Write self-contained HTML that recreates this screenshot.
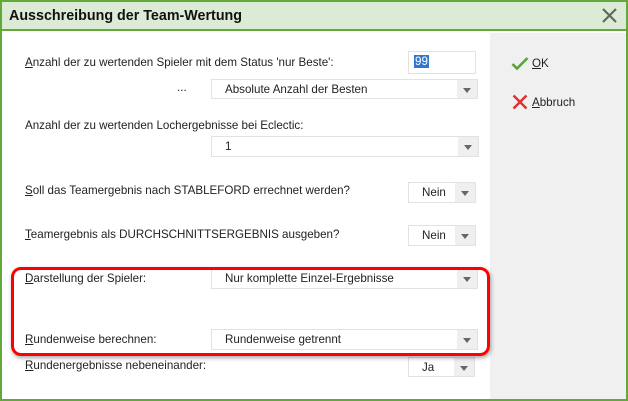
<!DOCTYPE html>
<html><head><meta charset="utf-8"><style>
*{margin:0;padding:0;box-sizing:border-box}
body{width:628px;height:401px;overflow:hidden;background:#fff;font-family:"Liberation Sans","DejaVu Sans",sans-serif;font-size:11.6px;color:#222;position:relative}
.frame{position:absolute;left:0;top:0;width:628px;height:401px;border:2px solid #63a83a}
.title{position:absolute;left:2px;top:2px;width:624px;height:29px;background:#dcebd6;border-bottom:2px solid #63a83a;font-weight:bold;font-size:14.3px;color:#111;padding:6px 0 0 7px}
.side{position:absolute;left:490px;top:33px;width:136px;height:366px;background:#f0f0f0}
.t{position:absolute;white-space:nowrap}
u{text-decoration:underline}
.cb{position:absolute;border:1px solid #e2e2e2;background:#fff}
.cb span{position:absolute;left:13px;top:3px}
.cb i{position:absolute;right:0;top:0;bottom:0;width:20px;background:#efefef}
.cb i:after{content:"";position:absolute;left:6px;top:8px;border-left:4px solid transparent;border-right:4px solid transparent;border-top:5px solid #666}
</style></head><body>
<div class="frame"></div>
<div class="title">Ausschreibung der Team-Wertung</div>
<svg style="position:absolute;left:601px;top:7px" width="17" height="17"><path d="M2 2L15 15M15 2L2 15" stroke="#666" stroke-width="2.2"/></svg>
<div class="side"></div>
<svg style="position:absolute;left:511px;top:56px" width="18" height="15"><path d="M1.5 8L6 12.5L16.5 2" stroke="#5ca33a" stroke-width="2.6" fill="none"/></svg>
<div class="t" style="left:532px;top:57px"><u>O</u>K</div>
<svg style="position:absolute;left:512px;top:94px" width="16" height="16"><path d="M1.5 1.5L14.5 14.5M14.5 1.5L1.5 14.5" stroke="#e03030" stroke-width="2.4"/></svg>
<div class="t" style="left:532px;top:96px"><u>A</u>bbruch</div>

<div class="t" style="left:25px;top:56px"><u>A</u>nzahl der zu wertenden Spieler mit dem Status 'nur Beste':</div>
<div style="position:absolute;left:408px;top:51px;width:68px;height:23px;border:1px solid #e2e2e2;background:#fff"><span style="position:absolute;left:5px;top:3px;background:#3377cc;color:#fff;padding:0 1px">99</span></div>
<div class="t" style="left:177px;top:81px">...</div>
<div class="cb" style="left:211px;top:79px;width:267px;height:20px"><span>Absolute Anzahl der Besten</span><i></i></div>

<div class="t" style="left:25px;top:119px">Anzahl der zu wertenden Lochergebnisse bei Eclectic:</div>
<div class="cb" style="left:211px;top:136px;width:268px;height:21px"><span>1</span><i></i></div>

<div class="t" style="left:25px;top:184px"><u>S</u>oll das Teamergebnis nach STABLEFORD errechnet werden?</div>
<div class="cb" style="left:408px;top:182px;width:68px;height:21px"><span>Nein</span><i></i></div>

<div class="t" style="left:25px;top:228px"><u>T</u>eamergebnis als DURCHSCHNITTSERGEBNIS ausgeben?</div>
<div class="cb" style="left:408px;top:225px;width:68px;height:21px"><span>Nein</span><i></i></div>

<div class="t" style="left:25px;top:272px"><u>D</u>arstellung der Spieler:</div>
<div class="cb" style="left:211px;top:268px;width:267px;height:21px"><span>Nur komplette Einzel-Ergebnisse</span><i></i></div>

<div class="t" style="left:25px;top:333px"><u>R</u>undenweise berechnen:</div>
<div class="cb" style="left:211px;top:329px;width:267px;height:21px"><span>Rundenweise getrennt</span><i></i></div>

<div class="t" style="left:25px;top:359px"><u>R</u>undenergebnisse nebeneinander:</div>
<div class="cb" style="left:408px;top:357px;width:67px;height:20px"><span>Ja</span><i></i></div>

<div style="position:absolute;left:11px;top:267px;width:479px;height:89px;border:3px solid #f00;border-radius:10px;box-shadow:1px 2px 4px rgba(0,0,0,.35)"></div>
</body></html>
